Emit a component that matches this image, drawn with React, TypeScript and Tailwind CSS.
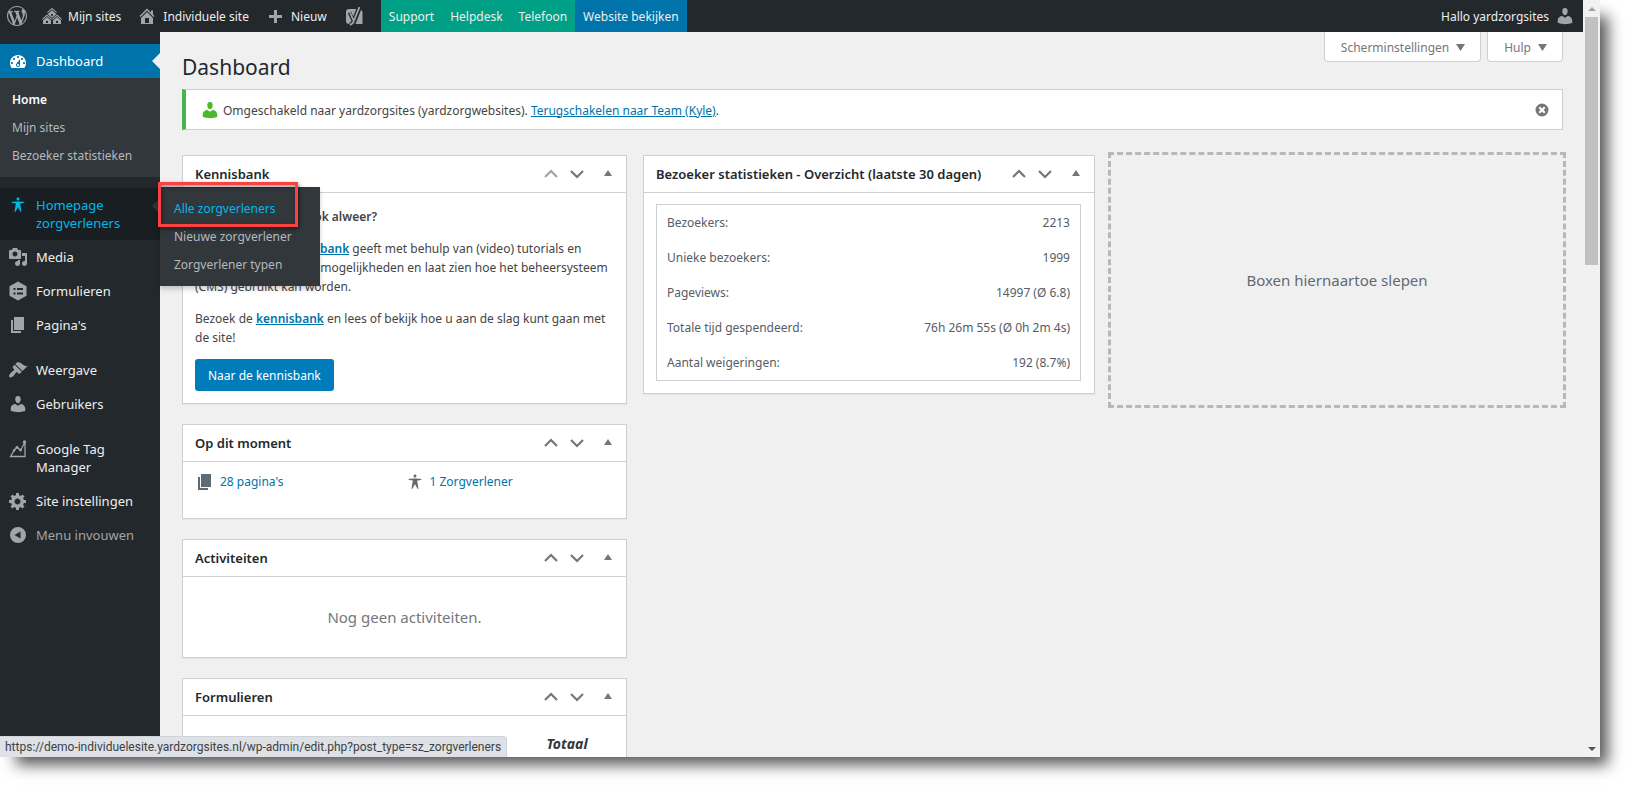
import type { ReactNode } from 'react';

const paths = {
    wordpress: 'M20 10c0-5.51-4.49-10-10-10C4.48 0 0 4.49 0 10c0 5.52 4.48 10 10 10 5.51 0 10-4.48 10-10zM7.78 15.37L4.37 6.22c.55-.02 1.17-.08 1.17-.08.5-.06.44-1.13-.06-1.11 0 0-1.45.11-2.37.11-.18 0-.37 0-.58-.01C4.12 2.69 6.87 1.11 10 1.11c2.33 0 4.45.87 6.05 2.34-.68-.11-1.65.39-1.65 1.58 0 .74.45 1.36.9 2.1.35.61.55 1.36.55 2.46 0 1.49-1.4 5-1.4 5l-3.03-8.37c.54-.02.82-.17.82-.17.5-.05.44-1.25-.06-1.22 0 0-1.44.12-2.38.12-.87 0-2.33-.12-2.33-.12-.5-.03-.56 1.2-.06 1.22l.92.08 1.26 3.41zM17.41 10c.24-.64.74-1.87.43-4.25.7 1.29 1.05 2.71 1.05 4.25 0 3.29-1.73 6.24-4.4 7.78.97-2.59 1.94-5.2 2.92-7.78zM6.1 18.09C3.12 16.65 1.11 13.53 1.11 10c0-1.3.23-2.48.72-3.59C3.25 10.3 4.67 14.2 6.1 18.09zm4.03-6.63l2.58 6.98c-.86.29-1.76.45-2.71.45-.79 0-1.57-.11-2.29-.33.81-2.38 1.62-4.74 2.42-7.1z',
    multisite: 'M14.27 6.87L10 3.14 5.73 6.87 5 6.14l5-4.38 5 4.38zM14 8.42l-4.05 3.43L6 8.38v-.74l4-3.5 4 3.5v.78zM11 9.7V8H9v1.7h2zm-1.73 4.03L5 10 .73 13.73 0 13l5-4.38L10 13zm10 0L15 10l-4.27 3.73L10 13l5-4.38L20 13zM5 11l4 3.5V18H1v-3.5zm10 0l4 3.5V18h-8v-3.5zm-9 6v-2H4v2h2zm10 0v-2h-2v2h2z',
    home: 'M16 8.5l1.53 1.53-1.06 1.06L10 4.6l-6.47 6.49-1.06-1.06L10 2.5l4 4v-2h2v4zm-6-2.46l6 5.99V18H4v-5.97zM12 17v-5H8v5h4z',
    plus: 'M17 9v3h-5v5H9v-5H4V9h5V4h3v5h5z',
    user: 'M10 9.25c-2.27 0-2.73-3.44-2.73-3.44C7 4.02 7.82 2 9.97 2c2.16 0 2.98 2.02 2.71 3.81 0 0-.41 3.44-2.68 3.44zm0 2.57L12.72 10c2.39 0 4.52 2.33 4.52 4.53v2.49s-3.65 1.13-7.24 1.13c-3.65 0-7.24-1.13-7.24-1.13v-2.49c0-2.25 1.94-4.48 4.47-4.48z',
    dashboard: 'M3.76 17h12.48c1.1-1.37 1.76-3.11 1.76-5 0-4.42-3.58-8-8-8s-8 3.58-8 8c0 1.89.66 3.63 1.76 5zM10 5c.55 0 1 .45 1 1s-.45 1-1 1-1-.45-1-1 .45-1 1-1zM6 7c.55 0 1 .45 1 1s-.45 1-1 1-1-.45-1-1 .45-1 1-1zm8 0c.55 0 1 .45 1 1s-.45 1-1 1-1-.45-1-1 .45-1 1-1zm-5.37 5.55L12 8v6c0 1.1-.9 2-2 2s-2-.9-2-2c0-.57.24-1.08.63-1.45zM4 11c.55 0 1 .45 1 1s-.45 1-1 1-1-.45-1-1 .45-1 1-1zm12 0c.55 0 1 .45 1 1s-.45 1-1 1-1-.45-1-1 .45-1 1-1zm-5 3c0-.55-.45-1-1-1s-1 .45-1 1 .45 1 1 1 1-.45 1-1z',
    access: 'M10 2.6c.83 0 1.5.67 1.5 1.5s-.67 1.51-1.5 1.51c-.82 0-1.5-.68-1.5-1.51s.68-1.5 1.5-1.5zM3.4 7.36c0-.65 6.6-.76 6.6-.76s6.6.11 6.6.76-4.47 1.4-4.47 1.4 1.69 8.14 1.06 8.38c-.62.24-3.19-5.19-3.19-5.19s-2.56 5.43-3.18 5.19c-.63-.24 1.06-8.38 1.06-8.38S3.4 8.01 3.4 7.36z',
    media: 'M13 11V4c0-.55-.45-1-1-1h-1.67L9 1H5L3.67 3H2c-.55 0-1 .45-1 1v7c0 .55.45 1 1 1h10c.55 0 1-.45 1-1zM7 4.5c1.38 0 2.5 1.12 2.5 2.5S8.38 9.5 7 9.5 4.5 8.38 4.5 7 5.62 4.5 7 4.5zM14 6h5v10.5c0 1.38-1.12 2.5-2.5 2.5S14 17.88 14 16.5s1.12-2.5 2.5-2.5c.17 0 .34.02.5.05V9h-3V6zm-4 8.05V13h2v3.5c0 1.38-1.12 2.5-2.5 2.5S7 17.88 7 16.5 8.12 14 9.5 14c.17 0 .34.02.5.05z',
    forms: 'M10 .5l8.5 4.75v9.5L10 19.5l-8.500-4.750v-9.500zM5.500 7v2h2V7zm3.500 0v2h6V7zm-3.500 4.500v2h2v-2zm3.500 0v2h6v-2z',
    page: 'M6 15V2h10v13H6zm-1 1h8v2H3V5h2v11z',
    brush: 'M14.48 11.06L7.41 3.99l1.5-1.5c.5-.56 2.3-.47 3.51.32 1.21.8 1.43 1.28 2.91 2.1 1.18.64 2.45 1.26 4.45.85zm-.71.71L6.7 4.7 4.93 6.47c-.39.39-.39 1.02 0 1.41l1.06 1.06c.39.39.39 1.03 0 1.42-.6.6-1.43 1.11-2.21 1.69-.35.26-.7.53-1.01.84C1.43 14.23.4 16.08 1.4 17.07c.99 1 2.84-.03 4.18-1.36.31-.31.58-.66.85-1.02.57-.78 1.08-1.61 1.69-2.21.39-.39 1.02-.39 1.41 0l1.06 1.06c.39.39 1.02.39 1.41 0z',
    gear: 'M18 12h-2.18c-.17.7-.44 1.35-.81 1.93l1.54 1.54-2.1 2.1-1.54-1.54c-.58.36-1.23.63-1.91.79V19H8v-2.18c-.68-.16-1.33-.43-1.91-.79l-1.54 1.54-2.12-2.12 1.54-1.54c-.36-.58-.63-1.23-.79-1.91H1V9.03h2.17c.16-.7.44-1.35.8-1.94L2.43 5.55l2.1-2.1 1.54 1.54c.58-.37 1.24-.64 1.93-.81V2h3v2.18c.68.16 1.33.43 1.91.79l1.54-1.54 2.12 2.12-1.54 1.54c.36.59.64 1.24.8 1.94H18V12zm-8.500 1.500c1.660 0 3-1.340 3-3s-1.340-3-3-3-3 1.340-3 3 1.340 3 3 3z',
    collapse: 'M10 2a8 8 0 1 0 0 16 8 8 0 1 0 0-16zm2.500 4.500v7L6.500 10z',
    dismiss: 'M10 3.500a6.500 6.500 0 1 0 0 13 6.500 6.500 0 1 0 0-13zM8 6.500l2 2 2-2L13.500 8l-2 2 2 2-1.500 1.500-2-2-2 2L6.500 12l2-2-2-2z',
    down: 'M6 7h9l-4.500 7z',
    up: 'M6 12h8l-4-6z',
};

type IconName = keyof typeof paths;

const Icon = ({ name, className = '' }: { name: IconName; className?: string }) => (
    <svg viewBox="0 0 20 20" className={`size-5 shrink-0 ${className}`} fill="currentColor" fillRule="evenodd" aria-hidden="true">
        <path d={paths[name]} />
    </svg>
);

const ChartIcon = () => (
    <svg viewBox="0 0 20 20" className="size-5 shrink-0" fill="none" stroke="currentColor" strokeWidth="1.3" aria-hidden="true">
        <path d="M6 11.500L2.500 17.500H17V3M6 11.500l3-3.500 3.500 3.500L17 3" />
        <g fill="currentColor" stroke="none">
            <circle cx="6" cy="11.500" r="1.200" />
            <circle cx="9" cy="8.500" r="1.400" />
            <circle cx="12.500" cy="11" r="1.400" />
            <circle cx="16.500" cy="3" r="1.700" />
        </g>
    </svg>
);

const YoastIcon = () => (
    <svg viewBox="0 0 20 20" className="size-5 shrink-0" aria-hidden="true">
        <path fill="currentColor" d="M5 3h10.500L10 18H5c-2 0-3-1-3-3V6c0-2 1-3 3-3zM17 4c1 .5 1.500 1.300 1.500 2.500V18h-7z" />
        <path fill="none" stroke="#23282d" strokeWidth="3.600" d="M5.500 6.500l3.500 7.500M15 1L9.500 15c-.8 2.200-1.800 3.200-4 3.500" />
        <path fill="none" stroke="currentColor" strokeWidth="1.800" d="M6 6.500l3.300 7.500M15.500 1L9.800 15c-.8 2.200-1.800 3.500-4 3.800" />
    </svg>
);

const toolbarLinks = ['Support', 'Helpdesk', 'Telefoon'];

const AdminBar = () => (
    <header className="flex h-8 shrink-0 items-center bg-[#23282d] text-[12px] text-[#eeeeee]">
        <a href="#wp" aria-label="WordPress" className="pl-[7px] text-[#a0a5aa]">
            <Icon name="wordpress" />
        </a>
        <a href="#sites" className="flex items-center gap-[6px] pl-[15px]">
            <Icon name="multisite" className="text-[#a0a5aa]" />
            <span className="pt-0.5">Mijn sites</span>
        </a>
        <a href="#site" className="flex items-center gap-[6px] pl-4">
            <Icon name="home" className="text-[#a0a5aa]" />
            <span className="pt-0.5">Individuele site</span>
        </a>
        <a href="#new" className="flex items-center gap-[6px] pl-4">
            <Icon name="plus" className="text-[#a0a5aa]" />
            <span className="pt-0.5">Nieuw</span>
        </a>
        <a href="#yoast" aria-label="Yoast SEO" className="px-[17px] text-[#a0a5aa]">
            <YoastIcon />
        </a>
        <nav className="flex h-full items-center bg-[#00a086] pt-0.5">
            {toolbarLinks.map((label) => (
                <a key={label} href={`#${label.toLowerCase()}`} className="px-2">
                    {label}
                </a>
            ))}
        </nav>
        <a href="#bekijken" className="flex h-full items-center bg-[#0073aa] px-2 pt-0.5">
            Website bekijken
        </a>
        <a href="#profiel" className="ml-auto flex items-center gap-[6px] pr-2">
            <span className="pt-0.5">Hallo yardzorgsites</span>
            <Icon name="user" className="text-[#a0a5aa]" />
        </a>
    </header>
);

const MenuItem = ({ icon, label, className = 'text-[#eeeeee]' }: { icon: ReactNode; label: string; className?: string }) => (
    <a href={`#${label}`} className={`flex gap-2 py-2 pl-2 pr-4 text-[13px] leading-[18px] ${className}`}>
        <span className="-my-px text-[#a0a5aa]">{icon}</span>
        {label}
    </a>
);

const flyoutItems = ['Alle zorgverleners', 'Nieuwe zorgverlener', 'Zorgverlener typen'];

const Sidebar = () => (
    <nav className="w-40 shrink-0 bg-[#23282d] pt-3">
        <a href="#dashboard" className="relative flex gap-2 bg-[#0073aa] py-2 pl-2 text-[13px] leading-[18px] text-white">
            <Icon name="dashboard" className="-my-px" />
            Dashboard
            <span className="absolute right-0 top-1/2 -translate-y-1/2 border-8 border-transparent border-r-[#f0f0f1]" />
        </a>
        <ul className="bg-[#32373c] px-3 pb-[7px] pt-2 text-[12px] leading-7 text-[#b4b9be]">
            <li><a href="#home" className="font-semibold text-white">Home</a></li>
            <li><a href="#mijn-sites">Mijn sites</a></li>
            <li><a href="#statistieken">Bezoeker statistieken</a></li>
        </ul>
        <div className="relative mt-[11px]">
            <a href="#zorgverleners" className="flex gap-2 bg-[#191e23] py-2 pl-2 text-[13px] leading-[18px] text-[#00b9eb]">
                <Icon name="access" className="-my-px" />
                <span>Homepage<br />zorgverleners</span>
            </a>
            <span className="absolute right-0 top-[10px] border-8 border-transparent border-r-[#32373c]" />
            <ul className="absolute -top-px left-full z-10 w-40 bg-[#32373c] px-[14px] pb-[7px] pt-2 text-[12px] leading-7 text-[#b4b9be] shadow-[0_3px_5px_rgba(0,0,0,0.2)]">
                {flyoutItems.map((label, i) => (
                    <li key={label}>
                        <a href={`#flyout-${i}`} className={i === 0 ? 'text-[#00b9eb]' : ''}>{label}</a>
                    </li>
                ))}
            </ul>
            <span className="absolute -right-[138px] -top-[6px] z-20 h-[45px] w-[140px] border-3 border-[#fa4340] shadow-[1px_2px_4px_rgba(0,0,0,0.5),inset_1px_2px_4px_rgba(0,0,0,0.4)]" />
        </div>
        <MenuItem icon={<Icon name="media" />} label="Media" />
        <MenuItem icon={<Icon name="forms" />} label="Formulieren" />
        <MenuItem icon={<Icon name="page" />} label="Pagina's" />
        <div className="h-[11px]" />
        <MenuItem icon={<Icon name="brush" />} label="Weergave" />
        <MenuItem icon={<Icon name="user" />} label="Gebruikers" />
        <div className="h-[11px]" />
        <MenuItem icon={<ChartIcon />} label="Google Tag Manager" />
        <MenuItem icon={<Icon name="gear" />} label="Site instellingen" className="text-[#eeeeee] whitespace-nowrap" />
        <button type="button" className="flex w-full gap-2 py-2 pl-2 text-[13px] leading-[18px] text-[#a0a5aa]">
            <Icon name="collapse" className="-my-px" />
            Menu invouwen
        </button>
    </nav>
);

const Chevron = ({ d }: { d: string }) => (
    <svg viewBox="0 0 20 20" className="size-5" fill="none" stroke="currentColor" strokeWidth="2.200" aria-hidden="true">
        <path d={d} />
    </svg>
);

type PostboxProps = { title: string; first?: boolean; children: ReactNode };

const Postbox = ({ title, first, children }: PostboxProps) => (
    <section className="border border-[#ccd0d4] bg-white shadow-[0_1px_1px_rgba(0,0,0,0.04)]">
        <div className="flex h-[37px] items-center border-b border-[#ccd0d4] pl-3 text-[#72777c]">
            <h2 className="mr-auto pt-0.5 text-[13px] font-semibold whitespace-nowrap text-[#23282d]">{title}</h2>
            <button type="button" aria-label="Omhoog" className={`flex w-[26px] justify-center ${first ? 'text-[#a0a5aa]' : ''}`}>
                <Chevron d="M4 13l6-6 6 6" />
            </button>
            <button type="button" aria-label="Omlaag" className="flex w-[26px] justify-center">
                <Chevron d="M4 7l6 6 6-6" />
            </button>
            <button type="button" aria-label="Inklappen" className="flex w-9 justify-center">
                <Icon name="up" />
            </button>
        </div>
        {children}
    </section>
);

const stats = [
    ['Bezoekers:', '2213'],
    ['Unieke bezoekers:', '1999'],
    ['Pageviews:', '14997 (Ø 6.8)'],
    ['Totale tijd gespendeerd:', '76h 26m 55s (Ø 0h 2m 4s)'],
    ['Aantal weigeringen:', '192 (8.7%)'],
];

const Widgets = () => (
    <div className="mt-[25px] grid grid-cols-[445fr_452fr_452fr] items-start gap-4">
        <div className="flex min-w-0 flex-col gap-5">
            <Postbox title="Kennisbank" first>
                <div className="px-3 pb-3 pt-[14px] leading-[19px]">
                    <p className="mb-[13px] font-semibold">Hoe werkt het dan ook alweer?</p>
                    <p className="mb-[13px] whitespace-nowrap">
                        Onze zorgsites <a href="#kennisbank" className="font-semibold text-[#0073aa] underline">kennisbank</a> geeft met behulp van (video) tutorials en<br />
                        uitleg over al de extra mogelijkheden en laat zien hoe het beheersysteem<br />
                        (CMS) gebruikt kan worden.
                    </p>
                    <p>
                        Bezoek de <a href="#kennisbank" className="font-semibold text-[#0073aa] underline">kennisbank</a> en lees of bekijk hoe u aan de slag kunt gaan met de site!
                    </p>
                    <button type="button" className="mt-3 h-8 rounded-[3px] bg-[#007cba] px-[13px] text-white">
                        Naar de kennisbank
                    </button>
                </div>
            </Postbox>
            <Postbox title="Op dit moment">
                <ul className="grid h-14 grid-cols-2 px-3 pt-[10px] leading-5 text-[#0073aa]">
                    <li>
                        <a href="#paginas" className="flex items-center gap-[5px]">
                            <Icon name="page" className="text-[#606a73]" />
                            28 pagina's
                        </a>
                    </li>
                    <li>
                        <a href="#zorgverlener" className="flex items-center gap-[5px]">
                            <Icon name="access" className="text-[#606a73]" />
                            1 Zorgverlener
                        </a>
                    </li>
                </ul>
            </Postbox>
            <Postbox title="Activiteiten">
                <p className="py-7 text-center text-[15px] leading-6 text-[#72777c]">Nog geen activiteiten.</p>
            </Postbox>
            <Postbox title="Formulieren">
                <table className="mb-6 mt-[18px] w-full">
                    <thead>
                        <tr>
                            <td />
                            <th scope="col" className="w-[118px] text-[14px] leading-5 font-bold italic text-[#32373c]">Totaal</th>
                        </tr>
                    </thead>
                </table>
            </Postbox>
        </div>
        <Postbox title="Bezoeker statistieken - Overzicht (laatste 30 dagen)">
            <div className="mb-3 ml-3 mr-[13px] mt-[11px] border border-[#ccd0d4]">
                <table className="w-full text-[#555d66]">
                    <tbody>
                        {stats.map(([label, value]) => (
                            <tr key={label} className="h-[35px]">
                                <th scope="row" className="pl-[10px] pt-px text-left font-normal">{label}</th>
                                <td className="pr-[10px] pt-px text-right">{value}</td>
                            </tr>
                        ))}
                    </tbody>
                </table>
            </div>
        </Postbox>
        <div className="-m-[3px] flex h-64 items-center justify-center border-3 border-dashed border-[#b4b9be] text-[15px] text-[#606a73]">
            Boxen hiernaartoe slepen
        </div>
    </div>
);

const Scrollbar = () => (
    <div className="flex w-[17px] shrink-0 flex-col items-center bg-[#f1f1f1]">
        <span className="flex h-[17px] items-center">
            <span className="border-x-4 border-b-4 border-x-transparent border-b-[#a3a3a3]" />
        </span>
        <span className="h-[248px] w-[13px] bg-[#c1c1c1]" />
        <span className="mt-auto flex h-[17px] items-center">
            <span className="border-x-4 border-t-4 border-x-transparent border-t-[#505050]" />
        </span>
    </div>
);

const App = () => (
    <div className="h-screen overflow-hidden bg-white pb-[30px] pr-[30px] font-['Noto_Sans','Open_Sans',sans-serif] text-[12px] text-[#444444]">
        <div className="relative flex h-full shadow-[12px_12px_14px_-4px_rgba(0,0,0,0.65)]">
            <div className="flex min-w-0 flex-1 flex-col overflow-hidden bg-[#f0f0f1]">
                <AdminBar />
                <div className="flex min-h-0 flex-1">
                    <Sidebar />
                    <main className="min-w-0 flex-1 pl-[22px] pr-5">
                        <div className="flex justify-between">
                            <h1 className="mt-[19px] text-[21px] leading-8 text-[#23282d]">Dashboard</h1>
                            <div className="flex items-start gap-[6px] text-[#72777c]">
                                <button type="button" className="flex h-[30px] items-center gap-px rounded-b-[4px] border border-t-0 border-[#ccd0d4] bg-white pl-4 pr-[10px]">
                                    <span className="pt-0.5">Scherminstellingen</span>
                                    <Icon name="down" />
                                </button>
                                <button type="button" className="flex h-[30px] items-center gap-px rounded-b-[4px] border border-t-0 border-[#ccd0d4] bg-white pl-4 pr-[10px]">
                                    <span className="pt-0.5">Hulp</span>
                                    <Icon name="down" />
                                </button>
                            </div>
                        </div>
                        <div className="mt-[6px] flex h-[41px] items-center border border-l-4 border-[#ccd0d4] border-l-[#46b450] bg-white pl-[14px] pr-[10px]">
                            <Icon name="user" className="text-[#4ab82d]" />
                            <p className="ml-[3px] mr-auto pt-0.5">
                                Omgeschakeld naar yardzorgsites (yardzorgwebsites).{' '}
                                <a href="#terug" className="text-[#0073aa] underline">Terugschakelen naar Team (Kyle)</a>.
                            </p>
                            <button type="button" aria-label="Melding sluiten" className="text-[#72777c]">
                                <Icon name="dismiss" />
                            </button>
                        </div>
                        <Widgets />
                    </main>
                </div>
            </div>
            <Scrollbar />
            <div className="absolute bottom-0 left-0 z-30 rounded-tr-[4px] border-r border-t border-[#d0d3d8] bg-[#dee1e6] px-[5px] font-['Roboto',sans-serif] text-[12px] leading-5 text-[#3c4043]">
                https://demo-individuelesite.yardzorgsites.nl/wp-admin/edit.php?post_type=sz_zorgverleners
            </div>
        </div>
    </div>
);

export default App;
